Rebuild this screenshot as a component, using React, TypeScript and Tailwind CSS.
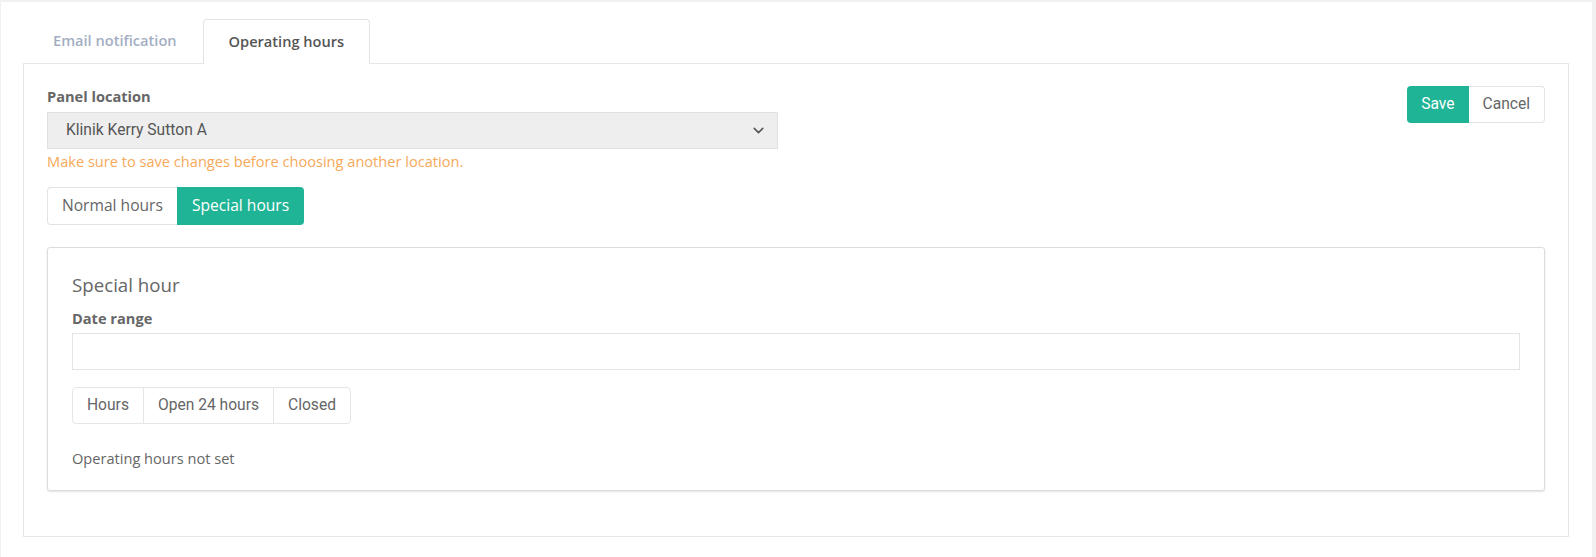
import { ChevronDown } from 'lucide-react'

const openSans = "font-['Open_Sans',sans-serif]"
const roboto = "font-['Roboto',sans-serif]"

export default function App() {
  return (
    <div className="min-h-[557px] bg-[#f1f1f1] pt-[2px] pl-[1px] pr-[4px]">
      <div className={`h-[555px] bg-white pl-[22px] pr-[23px] pt-[17px] ${openSans}`}>
        {/* Tabs */}
        <div className="flex h-[44px] items-stretch">
          <div className="flex items-center pl-[30px] pr-[26px] text-[14.6px] font-semibold text-[#a3aec2]">Email notification</div>
          <div className="relative -mb-px flex items-center rounded-t-[4px] border border-b-0 border-[#e3e3e3] bg-white px-[25px] text-[14.6px] font-semibold text-[#555]">
            Operating hours
          </div>
        </div>

        {/* Panel */}
        <div className="h-[474px] border border-[#e7e7e7] px-[23px] pt-[22px]">
          <div className="flex items-start justify-between">
            <div>
              <div className="h-[20px] text-[14.6px] font-bold leading-[20px] text-[#666]">Panel location</div>
              <div className={`mt-[6px] flex h-[37px] w-[731px] items-center justify-between border border-[#e0e0e0] bg-[#eeeeee] pl-[18px] pr-[10px] text-[15.6px] text-[#555] ${roboto}`}>
                <span>Klinik Kerry Sutton A</span>
                <ChevronDown className="h-[17px] w-[17px] text-[#555]" strokeWidth={2.2} />
              </div>
              <div className="mt-[2px] h-[20px] text-[14.6px] leading-[20px] text-[#f7a95a]">
                Make sure to save changes before choosing another location.
              </div>
              <div className="mt-[16px] flex h-[38px]">
                <button className="rounded-l-[4px] border border-r-0 border-[#e3e3e3] bg-white px-[14px] text-[15.6px] text-[#666]">
                  Normal hours
                </button>
                <button className="rounded-r-[4px] bg-[#1fb495] px-[15px] text-[15.6px] text-white">Special hours</button>
              </div>
            </div>
            <div className={`flex h-[37px] ${roboto}`}>
              <button className="rounded-l-[4px] bg-[#1fb495] px-[14px] text-[15.6px] text-white">Save</button>
              <button className="rounded-r-[4px] border border-l-0 border-[#e3e3e3] bg-white px-[14px] text-[15.6px] text-[#666]">
                Cancel
              </button>
            </div>
          </div>

          {/* Special hour card */}
          <div className="mt-[22px] h-[244px] rounded-[3px] border border-[#dcdcdc] px-[24px] pt-[24px] shadow-[0_1px_2px_rgba(0,0,0,0.12)]">
            <div className="h-[26px] text-[18.7px] leading-[26px] text-[#666]">Special hour</div>
            <div className="mt-[10px] h-[20px] text-[14.6px] font-bold leading-[20px] text-[#666]">Date range</div>
            <div className="mt-[5px] h-[37px] border border-[#e3e3e3] bg-white" />
            <div className={`mt-[17px] flex h-[37px] w-fit rounded-[4px] border border-[#e6e6e6] text-[15.6px] text-[#666] ${roboto}`}>
              <div className="flex items-center px-[14px]">Hours</div>
              <div className="flex items-center border-l border-[#e6e6e6] px-[14px]">Open 24 hours</div>
              <div className="flex items-center border-l border-[#e6e6e6] px-[14px]">Closed</div>
            </div>
            <div className="mt-[24px] text-[14.6px] leading-[20px] text-[#666]">Operating hours not set</div>
          </div>
        </div>
      </div>
    </div>
  )
}
